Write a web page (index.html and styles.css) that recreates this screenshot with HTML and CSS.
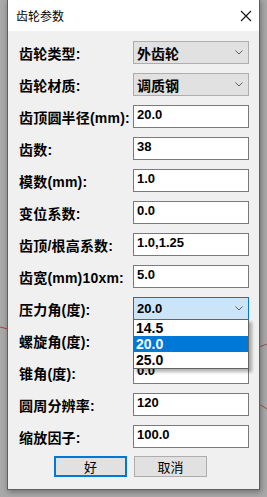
FILE: index.html
```html
<!DOCTYPE html>
<html lang="zh-CN">
<head>
<meta charset="UTF-8" />
<meta name="viewport" content="width=device-width, initial-scale=1.0">
<title>齿轮参数</title>
<link rel="stylesheet" href="styles.css">
</head>
<body>
<svg class="backdrop" width="267" height="497" viewBox="0 0 267 497">
  <line x1="0" y1="327" x2="8" y2="329" stroke="#b04040" stroke-width="1"/>
  <line x1="259" y1="347" x2="267" y2="344" stroke="#a05050" stroke-width="1"/>
  <line x1="259" y1="404" x2="267" y2="409" stroke="#a05050" stroke-width="1"/>
</svg>
<div class="dialog">
  <div class="titlebar">
    <span class="title">齿轮参数</span>
    <svg class="close" width="12" height="12" viewBox="0 0 12 12">
      <path d="M1 1 L11 11 M11 1 L1 11" stroke="#111" stroke-width="1.1" fill="none"/>
    </svg>
  </div>
  <div class="content">
    <div class="form">
      <label>齿轮类型:</label>
      <div class="combo"><span>外齿轮</span><svg class="chev" width="8" height="5" viewBox="0 0 8 5"><path d="M0.5 0.5 L4 4 L7.5 0.5" stroke="#606060" fill="none"/></svg></div>

      <label>齿轮材质:</label>
      <div class="combo"><span>调质钢</span><svg class="chev" width="8" height="5" viewBox="0 0 8 5"><path d="M0.5 0.5 L4 4 L7.5 0.5" stroke="#606060" fill="none"/></svg></div>

      <label>齿顶圆半径(mm):</label>
      <div class="edit">20.0</div>

      <label>齿数:</label>
      <div class="edit">38</div>

      <label>模数(mm):</label>
      <div class="edit">1.0</div>

      <label>变位系数:</label>
      <div class="edit">0.0</div>

      <label>齿顶/根高系数:</label>
      <div class="edit">1.0,1.25</div>

      <label>齿宽(mm)10xm:</label>
      <div class="edit">5.0</div>

      <label>压力角(度):</label>
      <div class="combo open"><span>20.0</span><svg class="chev" width="8" height="5" viewBox="0 0 8 5"><path d="M0.5 0.5 L4 4 L7.5 0.5" stroke="#606060" fill="none"/></svg>
        <ul class="droplist">
          <li>14.5</li>
          <li class="sel">20.0</li>
          <li>25.0</li>
        </ul>
      </div>

      <label>螺旋角(度):</label>
      <div class="edit">0.0</div>

      <label>锥角(度):</label>
      <div class="edit">0.0</div>

      <label>圆周分辨率:</label>
      <div class="edit">120</div>

      <label>缩放因子:</label>
      <div class="edit">100.0</div>
    </div>
    <div class="buttons">
      <button class="btn default">好</button>
      <button class="btn">取消</button>
    </div>
  </div>
</div>
</body>
</html>
```
FILE: styles.css
```css
body { margin:0; background:#a9a9a9; width:267px; height:497px; overflow:hidden; position:relative; font-family:"Liberation Sans","Noto Sans CJK SC",sans-serif; }
.backdrop { position:absolute; left:0; top:0; }
.dialog { position:relative; margin:-1px 0 0 7px; width:253px; height:491px; box-sizing:border-box; border:1px solid #5e5e5e; background:#f0f0f0; box-shadow:1px 2px 6px rgba(0,0,0,0.35); }
.titlebar { height:31px; background:#fff; display:flex; align-items:center; justify-content:space-between; padding:0 7px 0 8px; }
.title { font-family:"Noto Sans CJK SC",sans-serif; font-size:12px; color:#000; }
.close { display:block; }
.content { padding:10px 9px 0 11px; }
.form { display:grid; grid-template-columns:114px 116px; grid-auto-rows:23px; row-gap:9px; }
.form label { font-weight:bold; font-size:14px; color:#000; display:flex; align-items:center; white-space:nowrap; letter-spacing:0.2px; }
.combo { position:relative; box-sizing:border-box; border:1px solid #adadad; background:#e1e1e1; display:flex; align-items:center; justify-content:space-between; padding:0 5px 0 3px; font-weight:bold; font-size:14px; }
.combo.open { background:#cce4f7; border-color:#0078d7; font-size:13px; }
.chev { display:block; }
.edit { box-sizing:border-box; border:1px solid #7a7a7a; background:#fff; padding:1px 3px 0; font-weight:bold; font-size:13px; line-height:15px; color:#000; }
.droplist { position:absolute; left:-1px; right:-1px; top:21px; margin:0; padding:0; list-style:none; background:#fff; border:1px solid #646464; box-shadow:3px 3px 3px rgba(0,0,0,0.3); z-index:2; }
.droplist li { height:16px; line-height:16px; padding-left:2px; font-size:14px; font-weight:bold; color:#000; }
.droplist li.sel { background:#0078d7; color:#fff; }
.buttons { display:flex; gap:7px; margin-top:8px; padding-left:35px; }
.btn { width:73px; height:21px; box-sizing:border-box; border:1px solid #adadad; background:#e1e1e1; font-family:"Noto Sans CJK SC",sans-serif; font-size:13px; color:#000; padding:0; line-height:17px; }
.btn.default { border:2px solid #0078d7; }
```
